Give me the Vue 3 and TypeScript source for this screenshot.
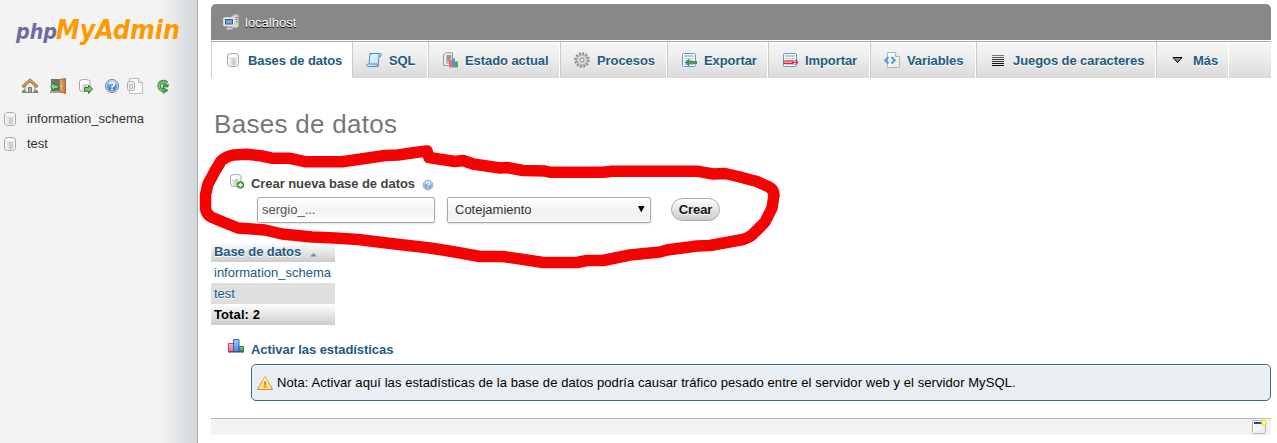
<script setup lang="ts">
interface Item {
  icon: string
  label: string
}

const shortcuts: Item[] = [
  { icon: 'home', label: 'Página de inicio' },
  { icon: 'exit', label: 'Salir' },
  { icon: 'db-go', label: 'Ventana de consultas' },
  { icon: 'help', label: 'Documentación' },
  { icon: 'docs', label: 'Documentación de MySQL' },
  { icon: 'reload', label: 'Recargar' },
]

const databases: string[] = ['information_schema', 'test']

const tabs: Item[] = [
  { icon: 'db', label: 'Bases de datos' },
  { icon: 'sql', label: 'SQL' },
  { icon: 'status', label: 'Estado actual' },
  { icon: 'gear', label: 'Procesos' },
  { icon: 'export', label: 'Exportar' },
  { icon: 'import', label: 'Importar' },
  { icon: 'vars', label: 'Variables' },
  { icon: 'lines', label: 'Juegos de caracteres' },
  { icon: 'more', label: 'Más' },
]
</script>

<template>
  <div class="page">
    <svg class="sprite" aria-hidden="true">
      <defs>
        <linearGradient id="g-can"><stop offset="0" stop-color="#f0f0f0" /><stop offset=".3" stop-color="#e2e2e2" /><stop offset=".6" stop-color="#c4c4c4" /><stop offset="1" stop-color="#ececec" /></linearGradient>
        <linearGradient id="g-blue" x2="0" y2="1"><stop offset="0" stop-color="#9cc4ee" /><stop offset="1" stop-color="#3e70bb" /></linearGradient>
        <linearGradient id="g-green" x2="0" y2="1"><stop offset="0" stop-color="#8fce76" /><stop offset="1" stop-color="#2f8a35" /></linearGradient>
        <linearGradient id="g-door"><stop offset="0" stop-color="#e7b079" /><stop offset="1" stop-color="#bc7738" /></linearGradient>
        <linearGradient id="g-paper" x2="1" y2="1"><stop offset="0" stop-color="#fff" /><stop offset="1" stop-color="#e9e9e9" /></linearGradient>
        <linearGradient id="g-scroll" x2="1" y2="1"><stop offset="0" stop-color="#f2f9ff" /><stop offset="1" stop-color="#b5d7f6" /></linearGradient>
        <linearGradient id="g-red" x2="0" y2="1"><stop offset="0" stop-color="#ffb0b0" /><stop offset="1" stop-color="#f56a70" /></linearGradient>
        <linearGradient id="g-bar" x2="0" y2="1"><stop offset="0" stop-color="#a9ccf8" /><stop offset="1" stop-color="#4a86e4" /></linearGradient>
        <linearGradient id="g-warn" x2="0" y2="1"><stop offset="0" stop-color="#efc45c" /><stop offset="1" stop-color="#d98a1f" /></linearGradient>
      </defs>
      <symbol id="i-db" viewBox="0 0 16 16">
        <path d="M2.500 3.800C2.500 2 5 1.500 8 1.500s5.500.5 5.500 2.300v8.400c0 1.800-2.500 2.300-5.500 2.300s-5.500-.5-5.500-2.300z" fill="#fdfdfd" stroke="#a6a6a6" />
        <path d="M4 5.800c2 1 6 1 8 0v6.700c-2 1.200-6 1.200-8 0z" fill="url(#g-can)" />
        <path d="M3.500 5c2 1.500 7 1.500 9 0" fill="none" stroke="#c9c9c9" stroke-width=".8" />
      </symbol>
      <symbol id="i-home" viewBox="0 0 16 16">
        <path d="M3 8l5-5 5 5v6.500H3z" fill="#ececec" stroke="#929292" />
        <path d="M6.500 14.500V9.500h3v5z" fill="#a8a8a8" stroke="#777" />
        <path d="M1.500 8.200L8 2.200l6.500 6" fill="none" stroke="#9d6a37" stroke-width="3" stroke-linecap="round" />
        <path d="M1.500 8L8 2l6.500 6" fill="none" stroke="#dba365" stroke-width="1.500" stroke-linecap="round" />
        <path d="M0 15v-2l2-1.500L4 13l1 2zM11 15l1-2 2-1.500 2 1.500v2z" fill="#55a052" />
      </symbol>
      <symbol id="i-exit" viewBox="0 0 16 16">
        <path d="M1 1h10v12H1z" fill="#6f756e" />
        <path d="M0 15h13v-2H0z" fill="#a5a39b" />
        <path d="M9.500 1.500L15.500.5v15l-6-2z" fill="url(#g-door)" stroke="#a86b31" />
        <circle cx="11.500" cy="8" r=".8" fill="#fff0ae" />
        <path d="M.5 8.500l4-4V7H8v3.500H4.500V13z" fill="#8ed579" stroke="#317f35" />
      </symbol>
      <symbol id="i-db-go" viewBox="0 0 16 16">
        <path d="M1.500 3.500c0-1.500 2.500-2 5-2s5.500.5 5.500 2v8c0 1.500-3 2-5.500 2s-5-.5-5-2z" fill="#fdfdfd" stroke="#a6a6a6" />
        <path d="M3 5.500c2 .8 5.500.8 7.500 0V12C8 13 5 13 3 12z" fill="url(#g-can)" />
        <path d="M6.500 9.500h4V7l4 4-4 4.500v-2.500h-4z" fill="#7fc666" stroke="#2e7e30" />
      </symbol>
      <symbol id="i-help" viewBox="0 0 16 16">
        <circle cx="8" cy="8" r="6.500" fill="#dceaf8" stroke="#5481bd" />
        <circle cx="8" cy="8" r="5.200" fill="url(#g-blue)" />
        <path d="M5.800 6.300C5.800 3.700 10.300 3.700 10.300 6.300 10.300 7.800 8 7.800 8 9.700" fill="none" stroke="#fff" stroke-width="1.600" />
        <circle cx="8" cy="11.600" r="1" fill="#fff" />
      </symbol>
      <symbol id="i-docs" viewBox="0 0 16 16">
        <path d="M2.500.5h9l4 4v11h-13z" fill="#fafafa" stroke="#bbb" />
        <path d="M11.500.5v4h4" fill="#eee" stroke="#bbb" />
        <rect x=".5" y="3.500" width="7" height="9" rx="2" fill="#f6f6f6" stroke="#aaa" />
        <path d="M2.500 6v4.500h3V6z" fill="#e4e4e4" stroke="#bbb" />
      </symbol>
      <symbol id="i-reload" viewBox="0 0 16 16">
        <path d="M11.800 5.300A4.300 4.300 0 1 0 8.500 12.300" fill="none" stroke="#378c3c" stroke-width="3.800" />
        <path d="M8 6.500h5.500l-.5 2.500H8zM8 9l5 3.500-5 3z" fill="#4b9f4b" stroke="#317d36" stroke-width=".6" />
        <path d="M11.500 5A4.300 4.300 0 1 0 8.500 12.300" fill="none" stroke="#84c579" stroke-width="1.700" />
      </symbol>
      <symbol id="i-sql" viewBox="0 0 16 16">
        <path d="M4 1.500h10c1.800 0 1.800 3 0 3h-1L12 14.500H2c-1.800 0-1.800-2.500 0-2.500h1z" fill="url(#g-scroll)" stroke="#5590cc" />
        <path d="M3.500 12h7.500l1 2.500M13 4.500V2M4 1.500c1 0 1.500.7 1.300 1.500" fill="none" stroke="#4d83bd" />
      </symbol>
      <symbol id="i-status" viewBox="0 0 16 16">
        <path d="M1.500 2.500L4 .8h6.500v11.500L8 13.500H1.500z" fill="#eee" stroke="#999" />
        <path d="M4 3h5.500v9H4z" fill="#bbb" />
        <path d="M5 4h4M5 6h4M5 8h3" stroke="#777" />
        <path d="M7 8h3v7.500H7z" fill="#f16e58" /><path d="M10 6.500h3v9h-3z" fill="#5492ee" /><path d="M13 9.500h3v6h-3z" fill="#52a94f" />
      </symbol>
      <symbol id="i-gear" viewBox="0 0 16 16">
        <circle cx="8" cy="8" r="6.700" fill="none" stroke="#8c8c8c" stroke-width="2.200" stroke-dasharray="2 1.508" />
        <circle cx="8" cy="8" r="5.400" fill="#cdcdcd" stroke="#999" />
        <circle cx="8" cy="8" r="3.700" fill="none" stroke="#dedede" stroke-width="1.200" />
        <circle cx="8" cy="8" r="2" fill="#f3f3f3" stroke="#8d8d8d" />
      </symbol>
      <symbol id="i-sheet" viewBox="0 0 16 16">
        <rect x="1.500" y="1.500" width="13" height="13" rx="1" fill="#fff" stroke="#6b95d7" />
        <path d="M3 4h10" stroke="#8fbd87" stroke-width="1.300" />
        <path d="M3 6.500h10M3 8.500h10M3 10.500h10M3 12.500h10M6 6v7M10 6v7" stroke="#b9cbe8" />
      </symbol>
      <symbol id="i-export" viewBox="0 0 16 16">
        <use href="#i-sheet" />
        <path d="M4 10.500l4-3.200v2.200h8v2H8v2.300z" fill="#45a049" stroke="#26782b" stroke-width=".6" />
      </symbol>
      <symbol id="i-import" viewBox="0 0 16 16">
        <use href="#i-sheet" />
        <path d="M1.800 9h9.500v2.500H1.800z" fill="#f9aaaa" stroke="#dc2631" />
        <path d="M10 10.300h5M13.300 7.800l2.500 2.500-2.500 2.500" fill="none" stroke="#e33240" stroke-width="1.300" />
      </symbol>
      <symbol id="i-vars" viewBox="0 0 16 16">
        <path d="M3.500.5h8l4 4v11h-12z" fill="url(#g-paper)" stroke="#b5b5b5" />
        <path d="M11.500.5v4h4" fill="#eee" stroke="#b5b5b5" />
        <path d="M4.500 5L1.300 8.300l3.200 3.200M7.500 5l3.200 3.300-3.200 3.200" fill="none" stroke="#509ae5" stroke-width="2" />
      </symbol>
      <symbol id="i-lines" viewBox="0 0 16 16">
        <path d="M2 3.500h12" stroke="#777" /><path d="M2 5.500h12" stroke="#555" /><path d="M2 7.500h12M2 9.500h12" stroke="#333" /><path d="M2 11.500h12M2 13.500h12" stroke="#111" />
      </symbol>
      <symbol id="i-more" viewBox="0 0 16 16">
        <path d="M3 5.500h9L7.500 10.500z" fill="#888" stroke="#000" />
      </symbol>
      <symbol id="i-server" viewBox="0 0 16 16">
        <path d="M8.500 2.500L11 .8h4.500v12l-1.500 1H8.500z" fill="#d8d8d8" stroke="#aaa" />
        <path d="M12 3.500h3M12 5.500h3" stroke="#888" /><path d="M13 7h1.500v2H13z" fill="#5abf4b" />
        <rect x=".5" y="3.500" width="11" height="8.500" rx="1" fill="#eee" stroke="#d4d4d4" />
        <rect x="2.500" y="5.500" width="7" height="4.500" fill="#7aa2db" stroke="#305a9a" />
        <path d="M6 12.500v2M3.500 14.800h6" stroke="#ddd" stroke-width="1.300" />
      </symbol>
      <symbol id="i-db-add" viewBox="0 0 16 16">
        <path d="M1.500 3.500c0-1.500 2.500-2 5-2s5.500.5 5.500 2v8c0 1.500-3 2-5.500 2s-5-.5-5-2z" fill="#fdfdfd" stroke="#a6a6a6" />
        <path d="M3 5.500c2 .8 5.500.8 7.500 0V12C8 13 5 13 3 12z" fill="url(#g-can)" />
        <circle cx="11.500" cy="12" r="3.300" fill="#63a94b" stroke="#397f2d" />
        <path d="M11.500 10v4M9.500 12h4" stroke="#fff" stroke-width="1.300" />
      </symbol>
      <symbol id="i-chart" viewBox="0 0 16 16">
        <path d="M.5 5.500h5v8h-5z" fill="url(#g-red)" stroke="#d9394c" />
        <path d="M11 8.500h4.500v5H11z" fill="url(#g-green)" stroke="#3a7e45" />
        <path d="M5.500 1.500H11v12H5.500z" fill="url(#g-bar)" stroke="#3267c9" />
        <path d="M0 14h16" stroke="#31408c" />
      </symbol>
      <symbol id="i-warn" viewBox="0 0 16 16">
        <path d="M8 1.500L15.300 14.300H.7z" fill="#fff" stroke="url(#g-warn)" stroke-width="1.300" stroke-linejoin="round" />
        <path d="M8 4.500l4.700 8.500H3.300z" fill="#f7d352" />
        <path d="M8 6.500v3.700M8 11.200v1.300" stroke="#b77c19" stroke-width="1.500" />
      </symbol>
      <symbol id="i-window" viewBox="0 0 16 16">
        <rect x="1.500" y="1.500" width="13" height="13" rx="1" fill="url(#g-paper)" stroke="#b5b5b5" />
        <path d="M3 3h8v2H3z" fill="#204a9c" />
        <circle cx="13" cy="3.500" r="2" fill="#fff" stroke="#fce91a" stroke-width="1.600" />
      </symbol>
    </svg>

    <aside class="sidebar">
      <svg class="logo" width="180" height="40" viewBox="0 0 180 40">
        <text class="logo-php" x="2" y="27" textLength="41" lengthAdjust="spacingAndGlyphs">php</text>
        <text class="logo-my" x="42" y="27" textLength="124" lengthAdjust="spacingAndGlyphs">MyAdmin</text>
      </svg>
      <nav class="shortcuts">
        <svg v-for="s in shortcuts" :key="s.icon" class="icon" :aria-label="s.label"><use :href="`#i-${s.icon}`" /></svg>
      </nav>
      <ul class="db-list">
        <li v-for="db in databases" :key="db">
          <svg class="icon"><use href="#i-db" /></svg>
          <span>{{ db }}</span>
        </li>
      </ul>
    </aside>

    <main class="main">
      <header class="server">
        <svg class="icon"><use href="#i-server" /></svg>
        <span>localhost</span>
      </header>
      <nav class="tabs">
        <a v-for="(t, i) in tabs" :key="t.icon" class="tab" :class="{ active: i === 0 }">
          <svg class="icon"><use :href="`#i-${t.icon}`" /></svg>
          <span>{{ t.label }}</span>
        </a>
      </nav>

      <h1>Bases de datos</h1>

      <form class="create" @submit.prevent>
        <div class="create-title">
          <svg class="icon"><use href="#i-db-add" /></svg>
          <strong>Crear nueva base de datos</strong>
          <svg class="mini-help"><use href="#i-help" /></svg>
        </div>
        <div class="fields">
          <div class="field name">sergio_...</div>
          <div class="field collation">
            <span>Cotejamiento</span>
            <svg width="7" height="7" viewBox="0 0 7 7"><path d="M0 0h6.500L3.250 6.500z" /></svg>
          </div>
          <button class="submit">Crear</button>
        </div>
      </form>

      <div class="table">
        <div class="row head">
          <span>Base de datos</span>
          <svg width="7" height="4" viewBox="0 0 7 4"><path d="M3.500 0L7 3.500H0z" fill="#8c8c8c" /></svg>
        </div>
        <div v-for="(db, i) in databases" :key="db" class="row" :class="{ even: i % 2 === 1 }">{{ db }}</div>
        <div class="row total">Total: {{ databases.length }}</div>
      </div>

      <div class="stats">
        <svg class="icon"><use href="#i-chart" /></svg>
        <strong>Activar las estadísticas</strong>
      </div>
      <div class="notice">
        <svg class="icon"><use href="#i-warn" /></svg>
        <span>Nota: Activar aquí las estadísticas de la base de datos podría causar tráfico pesado entre el servidor web y el servidor MySQL.</span>
      </div>

      <footer class="footer">
        <svg class="icon"><use href="#i-window" /></svg>
      </footer>
    </main>

    <svg class="marker" width="1277" height="443" viewBox="0 0 1277 443">
      <path d="M427 151L415 152.500 398 155 385 155.500 368 158 342 161.700H305L290 158.300H273L262 156 247 154.300 233 155Q225 157 221 161L215 171 208 184 205.500 195V208Q206 214 211 217L223 222 238 228 265 230 282 234 312 237 335 238 358 239.500 395 244 430 248 455 252 480 256.500H503L527 260 543 262.500H577L587 260.500H603L630 255 660 252 667 250 697 246 710 245.500 743 239.500Q751 237 754 233L765 222 772 208 774 195Q774 190 769 187L757 181.500 738 176.500 725 173.500 713 174 697 171.200H612L603 172.300H550L545 171 523 170.500 507 167.500 500 168 473 164 463 160.500 455 161.500 429 157.500Z" />
    </svg>
  </div>
</template>

<style>
body {
  margin: 0;
  overflow: hidden;
  background: #fff;
}
</style>

<style scoped>
.page {
  position: relative;
  display: flex;
  width: 1277px;
  height: 443px;
  font: 13px/21px "Liberation Sans", Arial, sans-serif;
  color: #444;
}
.page * {
  box-sizing: border-box;
}
.sprite {
  position: absolute;
  width: 0;
  height: 0;
}
.icon {
  width: 16px;
  height: 16px;
  flex: none;
}
.sidebar {
  width: 198px;
  flex: none;
  border-right: 1px solid #aaa;
  background: linear-gradient(to right, #f3f3f3 160px, #d3d7da 197px);
  color: #333;
}
.logo {
  display: block;
  margin: 12px 0 0 14px;
}
.logo text {
  font-family: "DejaVu Sans", sans-serif;
  font-weight: bold;
  font-style: italic;
}
.logo-php {
  font-size: 21px;
  fill: #6c6ca3;
}
.logo-my {
  font-size: 27px;
  fill: #f90;
}
.shortcuts {
  display: grid;
  grid-template-columns: 28px 28px 26px 23px 28px 16px;
  margin: 26px 0 0 22px;
}
.db-list {
  list-style: none;
  margin: 12px 0 0;
  padding: 0 0 0 2px;
}
.db-list li {
  display: flex;
  align-items: center;
  gap: 9px;
  height: 25px;
}
.db-list span {
  margin-top: -1px;
}
.main {
  width: 1060px;
  margin: 4px 0 0 13px;
}
.server {
  display: flex;
  align-items: center;
  gap: 6px;
  height: 36px;
  padding-left: 12px;
  border-radius: 5px 5px 0 0;
  background: #888;
  color: #fff;
  text-shadow: 0 1px 0 #000;
}
.tabs {
  display: grid;
  grid-template-columns: 141px 76px 132px 107px 101px 102px 106px 180px 73px;
  height: 37px;
  margin-top: 1px;
  border-top: 1px solid #aaa;
  background: linear-gradient(#fff 1px, #f3f3f3 2px, #f1f1f1 30%, #dadada);
}
.tab {
  display: flex;
  align-items: center;
  gap: 7px;
  padding-left: 13px;
  border-left: 1px solid #ccc;
  border-right: 1px solid #fff;
  color: #235a81;
  font-weight: bold;
  letter-spacing: -.08px;
  white-space: nowrap;
  text-shadow: 0 1px 0 #fff;
}
.tab.active {
  background: #fff;
}
h1 {
  height: 30px;
  margin: 31px 0 0 3px;
  font-size: 26px;
  line-height: 30px;
  font-weight: normal;
  letter-spacing: .29px;
  color: #777;
}
.create {
  height: 103px;
  padding-top: 34px;
}
.create-title {
  display: flex;
  height: 24px;
  padding-left: 18px;
}
.create-title strong {
  margin-left: 6px;
  letter-spacing: -.06px;
}
.mini-help {
  width: 12px;
  height: 12px;
  margin: 6px 0 0 7px;
  opacity: .8;
}
.fields {
  display: flex;
  height: 26px;
  padding-left: 46px;
}
.field {
  height: 26px;
  border: 1px solid #aaa;
  border-radius: 2px;
  box-shadow: 0 1px 2px #ddd;
  line-height: 24px;
}
.name {
  width: 178px;
  padding-left: 4px;
  color: #555;
  background: linear-gradient(#fff, #f3f3f3 50%, #fff);
}
.collation {
  display: flex;
  justify-content: space-between;
  width: 204px;
  margin-left: 12px;
  padding: 0 5px 0 7px;
  color: #333;
  background: linear-gradient(#fff, #f1f1f1 60%, #f8f8f8);
}
.collation svg {
  margin-top: 8px;
}
.submit {
  width: 49px;
  height: 23px;
  margin: 1px 0 0 20px;
  padding: 0;
  border: 1px solid #aaa;
  border-radius: 12px;
  background: linear-gradient(#fff, #ccc);
  color: #111;
  font: bold 13px/20px "Liberation Sans", Arial, sans-serif;
  letter-spacing: -.1px;
  text-shadow: 0 1px 0 #fff;
}
.table {
  width: 124px;
}
.row {
  height: 21px;
  padding-left: 3px;
  line-height: 21px;
  color: #235a81;
  white-space: nowrap;
}
.head {
  display: flex;
  height: 20px;
  line-height: 19px;
  font-weight: bold;
  letter-spacing: -.08px;
  background: linear-gradient(#fff, #ccc);
  text-shadow: 0 1px 0 #fff;
}
.head svg {
  margin: 11px 0 0 9px;
}
.even {
  background: #dfdfdf;
  text-shadow: 0 1px 0 #fff;
}
.total {
  color: #000;
  font-weight: bold;
  letter-spacing: .1px;
  background: linear-gradient(#fff, #ccc);
}
.stats {
  display: flex;
  gap: 7px;
  height: 39px;
  padding: 13px 0 0 17px;
  color: #235a81;
  letter-spacing: -.06px;
}
.stats strong {
  margin-top: 1px;
}
.notice {
  display: flex;
  align-items: center;
  gap: 4px;
  height: 37px;
  margin-left: 40px;
  padding-left: 5px;
  border: 1px solid #3a6c7e;
  border-radius: 5px;
  box-shadow: inset 0 1px 1px #fff;
  background: #e8eef1;
  color: #000;
  letter-spacing: .075px;
  white-space: nowrap;
}
.footer {
  display: flex;
  justify-content: flex-end;
  height: 17px;
  margin-top: 17px;
  padding-right: 4px;
  border-top: 1px solid #bbb;
  background: #f3f3f3;
}
.marker {
  position: absolute;
  top: 0;
  left: 0;
  pointer-events: none;
}
.marker path {
  fill: none;
  stroke: #f40303;
  stroke-width: 11.500;
  stroke-linejoin: round;
}
</style>
